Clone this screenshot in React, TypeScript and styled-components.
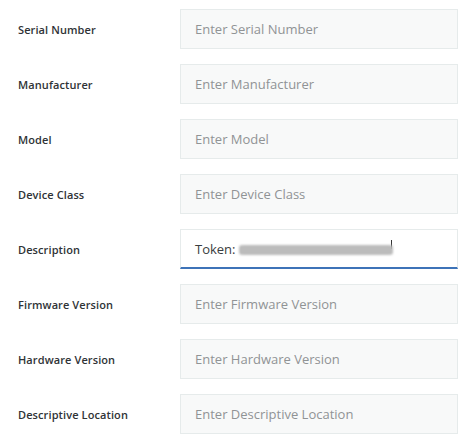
import styled, { createGlobalStyle } from "styled-components";

const GlobalStyle = createGlobalStyle`
  body {
    margin: 0;
    background: #ffffff;
    font-family: "Open Sans", "Liberation Sans", sans-serif;
  }
`;

const fields = [
  { label: "Serial Number", placeholder: "Enter Serial Number" },
  { label: "Manufacturer", placeholder: "Enter Manufacturer" },
  { label: "Model", placeholder: "Enter Model" },
  { label: "Device Class", placeholder: "Enter Device Class" },
  { label: "Description", placeholder: "", value: "Token:", focused: true },
  { label: "Firmware Version", placeholder: "Enter Firmware Version" },
  { label: "Hardware Version", placeholder: "Enter Hardware Version" },
  { label: "Descriptive Location", placeholder: "Enter Descriptive Location" },
];

const App = () => {
  return (
    <>
      <GlobalStyle />
      <S.Form>
        {fields.map((f) => (
          <S.Row key={f.label}>
            <S.Label>{f.label}</S.Label>
            <S.Field $focused={!!f.focused}>
              {f.value ? (
                <S.Value>
                  {f.value}
                  <S.Redacted />
                  <S.Caret />
                </S.Value>
              ) : (
                <S.Placeholder>{f.placeholder}</S.Placeholder>
              )}
            </S.Field>
          </S.Row>
        ))}
      </S.Form>
    </>
  );
};

export default App;

const S = {
  Form: styled.div`
    display: flex;
    flex-direction: column;
    gap: 15px;
    padding: 9px 13px 14px 18px;
    width: 471px;
    box-sizing: border-box;
  `,

  Row: styled.div`
    display: grid;
    grid-template-columns: 162px 1fr;
    align-items: center;
    height: 40px;
  `,

  Label: styled.div`
    font-size: 11px;
    font-weight: 600;
    color: #2f3336;
    letter-spacing: 0.1px;
  `,

  Field: styled.div<{ $focused: boolean }>`
    height: 40px;
    box-sizing: border-box;
    display: flex;
    align-items: center;
    padding: 0 14px;
    background: ${(p) => (p.$focused ? "#ffffff" : "#f8f9f9")};
    border: 1px solid #e6ebeb;
    border-bottom: ${(p) => (p.$focused ? "2px solid #3d73b8" : "1px solid #e6ebeb")};
  `,

  Placeholder: styled.span`
    font-size: 13px;
    color: #909395;
  `,

  Value: styled.span`
    display: flex;
    align-items: center;
    font-size: 13px;
    color: #3a3d40;
  `,

  Redacted: styled.span`
    display: inline-block;
    width: 154px;
    height: 10px;
    margin-left: 3px;
    margin-top: 2px;
    background: #bcbcbc;
    border-radius: 3px;
    filter: blur(1.3px);
  `,

  Caret: styled.span`
    display: inline-block;
    width: 1px;
    height: 9px;
    margin-left: -2px;
    margin-top: -8px;
    background: #333;
  `,
};
